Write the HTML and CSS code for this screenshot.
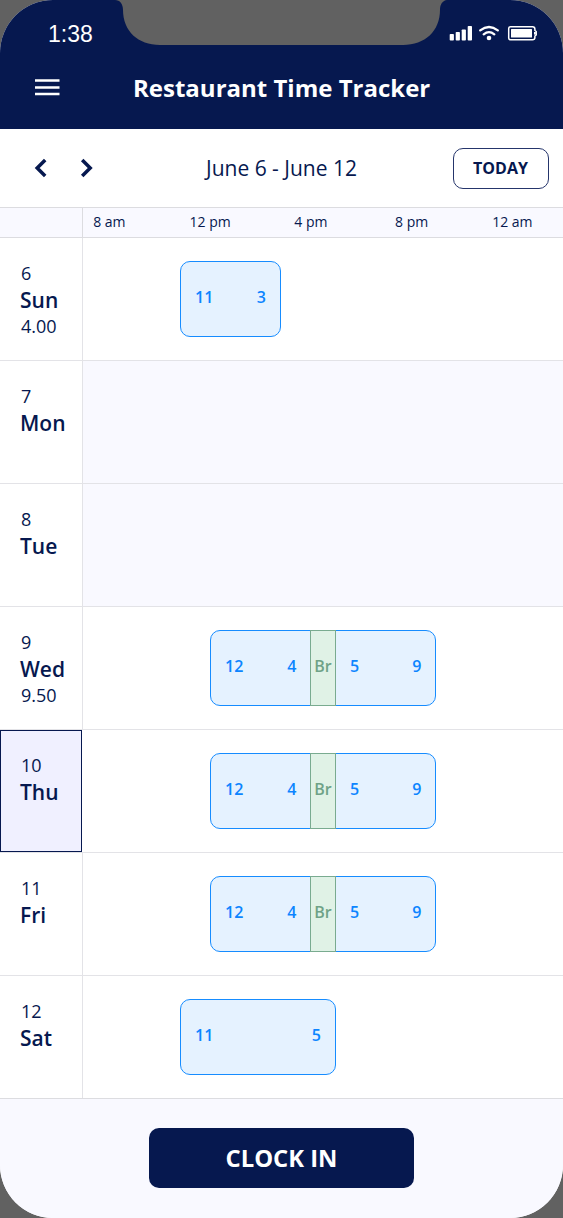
FILE: index.html
```html
<!DOCTYPE html>
<html lang="en">
<head>
<meta charset="utf-8">
<title>Restaurant Time Tracker</title>
<link rel="stylesheet" href="styles.css">
</head>
<body>
<div class="phone">
  <svg class="notch" width="332" height="46" viewBox="115 0 332 46"><path d="M115 0C120 0 123 4 123 10C123 31 138 45 160 45H403C425 45 440 31 440 10C440 4 443 0 448 0Z" fill="#616161"/></svg>
  <header class="header">
    <div class="status">
      <span class="clock">1:38</span>
      <svg class="status-icons" width="90" height="18" viewBox="448 24 90 18" fill="#fff">
        <rect x="449.700" y="34" width="4.200" height="6.500" rx=".8"/><rect x="455.700" y="32" width="4.200" height="8.500" rx=".8"/><rect x="461.700" y="29.500" width="4.200" height="11" rx=".8"/><rect x="467.700" y="26" width="4.300" height="14.500" rx=".8"/>
        <path d="M480.200 30.300Q489 23.700 497.800 30.300M483.700 34.300Q489 30 494.300 34.300" fill="none" stroke="#fff" stroke-width="2.300" stroke-linecap="round"/>
        <circle cx="489" cy="38" r="2.300"/>
        <path d="M510.500 26.700H532.500Q534.900 26.700 534.900 29V30.500L536.200 31.500V35L534.900 36V37.500Q534.900 39.800 532.500 39.800H510.500Q508.700 39.800 508.700 38V28.500Q508.700 26.700 510.500 26.700Z" fill="none" stroke="#fff" stroke-width="1.500"/>
        <rect x="511" y="29" width="21" height="8.500" rx=".5"/><rect x="534" y="32" width="1.800" height="2.600"/>
      </svg>
    </div>
    <div class="titlebar">
      <svg class="menu" width="25" height="17" viewBox="0 0 25 17"><path d="M0 1.500H24.500M0 8.500H24.500M0 15H24.500" stroke="#fff" stroke-width="2.600"/></svg>
      <h1 class="title">Restaurant Time Tracker</h1>
    </div>
  </header>
  <nav class="toolbar">
    <svg class="arrows" width="60" height="20" viewBox="34 158 60 20" fill="none" stroke="#06184f" stroke-width="3.500"><path d="M45.200 160L37.200 168L45.200 176M82.200 160L90.200 168L82.200 176"/></svg>
    <span class="range">June 6 - June 12</span>
    <button class="today">TODAY</button>
  </nav>
  <div class="hours">
    <div class="hours-gap"></div>
    <div class="hours-list"><span>8 am</span><span>12 pm</span><span>4 pm</span><span>8 pm</span><span>12 am</span></div>
  </div>
  <main class="days">
    <section class="row"><div class="day"><span class="num">6</span><b class="name">Sun</b><span class="num">4.00</span></div><div class="lane"><div class="shift early short"><div class="work"><span>11</span><span>3</span></div></div></div></section>
    <section class="row"><div class="day"><span class="num">7</span><b class="name">Mon</b></div><div class="lane off"></div></section>
    <section class="row"><div class="day"><span class="num">8</span><b class="name">Tue</b></div><div class="lane off"></div></section>
    <section class="row"><div class="day"><span class="num">9</span><b class="name">Wed</b><span class="num">9.50</span></div><div class="lane"><div class="shift split"><div class="work"><span>12</span><span>4</span></div><div class="break">Br</div><div class="work"><span>5</span><span>9</span></div></div></div></section>
    <section class="row"><div class="day current"><span class="num">10</span><b class="name">Thu</b></div><div class="lane"><div class="shift split"><div class="work"><span>12</span><span>4</span></div><div class="break">Br</div><div class="work"><span>5</span><span>9</span></div></div></div></section>
    <section class="row"><div class="day"><span class="num">11</span><b class="name">Fri</b></div><div class="lane"><div class="shift split"><div class="work"><span>12</span><span>4</span></div><div class="break">Br</div><div class="work"><span>5</span><span>9</span></div></div></div></section>
    <section class="row"><div class="day"><span class="num">12</span><b class="name">Sat</b></div><div class="lane"><div class="shift early long"><div class="work"><span>11</span><span>5</span></div></div></div></section>
  </main>
  <footer class="footer"><button class="clock-in">CLOCK IN</button></footer>
</div>
</body>
</html>
```
FILE: styles.css
```css
* { box-sizing: border-box; }
body { margin: 0; background: #616161; font-family: "Open Sans", sans-serif; color: #06184f; }
button { font-family: inherit; margin: 0; padding: 0; }
.phone { position: relative; width: 563px; height: 1218px; overflow: hidden; border-radius: 53px; background: #fff; display: flex; flex-direction: column; }
.notch { position: absolute; left: 115px; top: 0; }
.header { height: 129px; flex: none; background: #06184f; color: #fff; }
.status { height: 58px; padding: 20px 25px 0 48px; display: flex; justify-content: space-between; }
.clock { font: 23px/28px "Liberation Sans", sans-serif; }
.status-icons { margin-top: 4px; }
.titlebar { height: 60px; padding-left: 35px; display: flex; align-items: center; }
.menu { flex: none; margin: 0 73px 2px 0; }
.title { margin: 0; font-size: 24px; line-height: 32px; font-weight: 700; white-space: nowrap; }
.toolbar { height: 78px; flex: none; padding: 0 14.5px 0 34px; display: flex; align-items: center; }
.arrows { flex: none; margin-right: 112px; }
.range { font-size: 21px; line-height: 28px; white-space: nowrap; }
.today { margin-left: auto; width: 96px; height: 41px; border: 1px solid #25356b; border-radius: 10px; background: #fff; color: #06184f; font-size: 16px; font-weight: 700; }
.hours { height: 31px; flex: none; display: flex; border-top: 1px solid #dcdce0; border-bottom: 1px solid #dcdce0; background: #f9f9ff; }
.hours-gap { width: 83px; flex: none; border-right: 1px solid #dcdce0; }
.hours-list { margin-left: -24px; display: grid; grid-template-columns: repeat(5, 100.75px); font-size: 14px; line-height: 28px; text-align: center; }
.row { height: 123px; display: flex; border-bottom: 1px solid #e3e3e7; }
.row:last-child { border-color: #dcdce0; }
.day { width: 83px; flex: none; border-right: 1px solid #e3e3e7; padding: 22px 0 0 21px; display: flex; flex-direction: column; }
.current { width: 82px; margin-right: 1px; padding: 21px 0 0 20px; border: 1px solid #06184f; background: #f0f0ff; }
.num { font-size: 18px; line-height: 26px; }
.name { margin-left: -1px; padding-top: 1px; font-size: 21px; line-height: 26px; font-weight: 600; }
.lane { flex: 1; padding-top: 23px; }
.off { background: #f9f9ff; }
.shift { height: 76px; display: flex; border: 1px solid #168cff; border-radius: 10px; background: #e5f2ff; color: #0c85ff; font-size: 16px; line-height: 70px; font-weight: 600; }
.early { margin-left: 97px; }
.short { width: 101px; }
.long { width: 156px; }
.split { margin-left: 127px; width: 226px; }
.work { flex: 1; padding: 0 14px; display: flex; justify-content: space-between; }
.split .work { padding-right: 13.5px; }
.split .work:first-child { flex: none; width: 99px; }
.break { width: 26px; flex: none; margin: -1px 0; border: 1px solid #79ab90; background: #e0f2e6; color: #6fa287; text-align: center; }
.footer { flex: 1; padding-top: 29px; background: #f9f9ff; display: flex; justify-content: center; align-items: flex-start; }
.clock-in { width: 265px; height: 60px; border: 0; border-radius: 10px; background: #06184f; color: #fff; font-size: 23.8px; font-weight: 700; }
```
